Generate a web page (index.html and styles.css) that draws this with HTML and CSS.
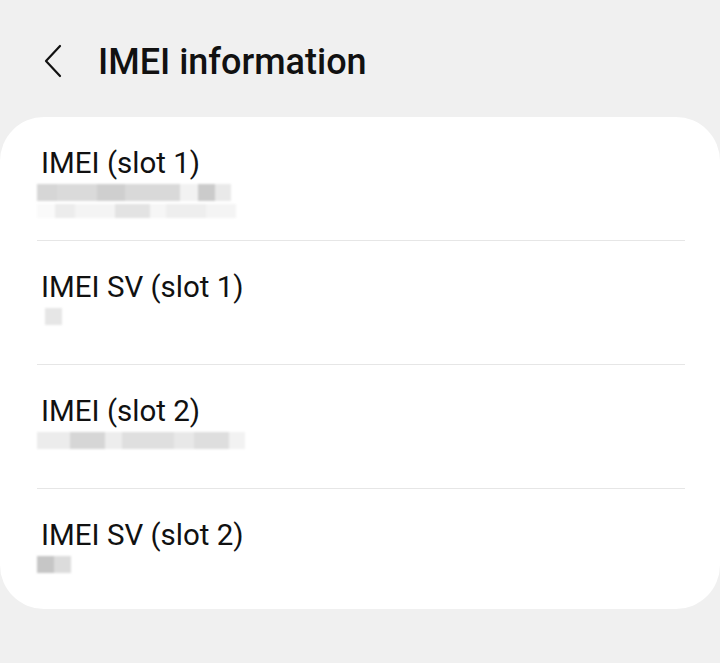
FILE: index.html
```html
<!DOCTYPE html>
<html>
<head>
<meta charset="utf-8">
<link rel="stylesheet" href="styles.css">
</head>
<body>
<div class="page">
  <header class="topbar">
    <svg class="back" width="24" height="36" viewBox="0 0 24 36"><path d="M18 2 L4 17 L18 32" fill="none" stroke="#111" stroke-width="2.2" stroke-linecap="round" stroke-linejoin="round"/></svg>
    <h1 class="title">IMEI information</h1>
  </header>
  <section class="card">
    <div class="row">
      <div class="label">IMEI (slot 1)</div>
      <div class="value">
        <div class="blurline">
          <span class="blk" style="width:20px;background:#d6d6d6"></span>
          <span class="blk" style="width:40px;background:#dadada"></span>
          <span class="blk" style="width:28px;background:#cfcfcf"></span>
          <span class="blk" style="width:55px;background:#d9d9d9"></span>
          <span class="blk" style="width:18px;background:#f2f2f2"></span>
          <span class="blk" style="width:17px;background:#cbcbcb"></span>
          <span class="blk" style="width:16px;background:#e9e9e9"></span>
        </div>
        <div class="blurline thin">
          <span class="blk" style="width:18px;background:#fafafa"></span>
          <span class="blk" style="width:20px;background:#ececec"></span>
          <span class="blk" style="width:40px;background:#f4f4f4"></span>
          <span class="blk" style="width:35px;background:#e3e3e3"></span>
          <span class="blk" style="width:16px;background:#f6f6f6"></span>
          <span class="blk" style="width:40px;background:#eeeeee"></span>
          <span class="blk" style="width:30px;background:#f4f4f4"></span>
        </div>
      </div>
    </div>
    <div class="row">
      <div class="label">IMEI SV (slot 1)</div>
      <div class="value">
        <div class="blurline">
          <span class="blk" style="width:8px;background:#ffffff"></span>
          <span class="blk" style="width:17px;background:#e6e6e6"></span>
        </div>
      </div>
    </div>
    <div class="row">
      <div class="label">IMEI (slot 2)</div>
      <div class="value">
        <div class="blurline">
          <span class="blk" style="width:33px;background:#ececec"></span>
          <span class="blk" style="width:35px;background:#d6d6d6"></span>
          <span class="blk" style="width:17px;background:#ededed"></span>
          <span class="blk" style="width:52px;background:#dfdfdf"></span>
          <span class="blk" style="width:20px;background:#e8e8e8"></span>
          <span class="blk" style="width:35px;background:#dedede"></span>
          <span class="blk" style="width:16px;background:#f2f2f2"></span>
        </div>
      </div>
    </div>
    <div class="row">
      <div class="label">IMEI SV (slot 2)</div>
      <div class="value">
        <div class="blurline">
          <span class="blk" style="width:17px;background:#c6c6c6"></span>
          <span class="blk" style="width:17px;background:#dcdcdc"></span>
        </div>
      </div>
    </div>
  </section>
</div>
</body>
</html>
```

FILE: styles.css
```css
html, body {
  margin: 0;
  padding: 0;
  background: #f0f0f0;
}
body {
  font-family: Roboto, "Liberation Sans", sans-serif;
  color: #111;
}
.page {
  width: 720px;
  height: 663px;
  overflow: hidden;
}
.topbar {
  height: 117px;
  display: flex;
  align-items: center;
  padding-left: 42px;
  box-sizing: border-box;
  padding-top: 6px;
}
.back {
  display: block;
  margin-right: 32px;
}
.title {
  margin: 0;
  font-size: 36px;
  font-weight: 500;
  letter-spacing: 0;
  line-height: 40px;
}
.card {
  background: #ffffff;
  border-radius: 44px;
  overflow: hidden;
}
.row {
  margin: 0 35px 0 37px;
  border-bottom: 1px solid #e6e6e6;
  padding-top: 29px;
  box-sizing: content-box;
  height: 94px;
}
.row:last-child {
  border-bottom: none;
  height: 91px;
}
.label {
  font-size: 29.5px;
  line-height: 34px;
  padding-left: 4px;
}
.value {
  padding-top: 4px;
}
.blurline {
  display: flex;
  height: 17px;
  filter: blur(1.2px);
}
.blurline.thin {
  height: 14px;
  margin-top: 3px;
}
.blk {
  display: block;
  height: 100%;
}
```
